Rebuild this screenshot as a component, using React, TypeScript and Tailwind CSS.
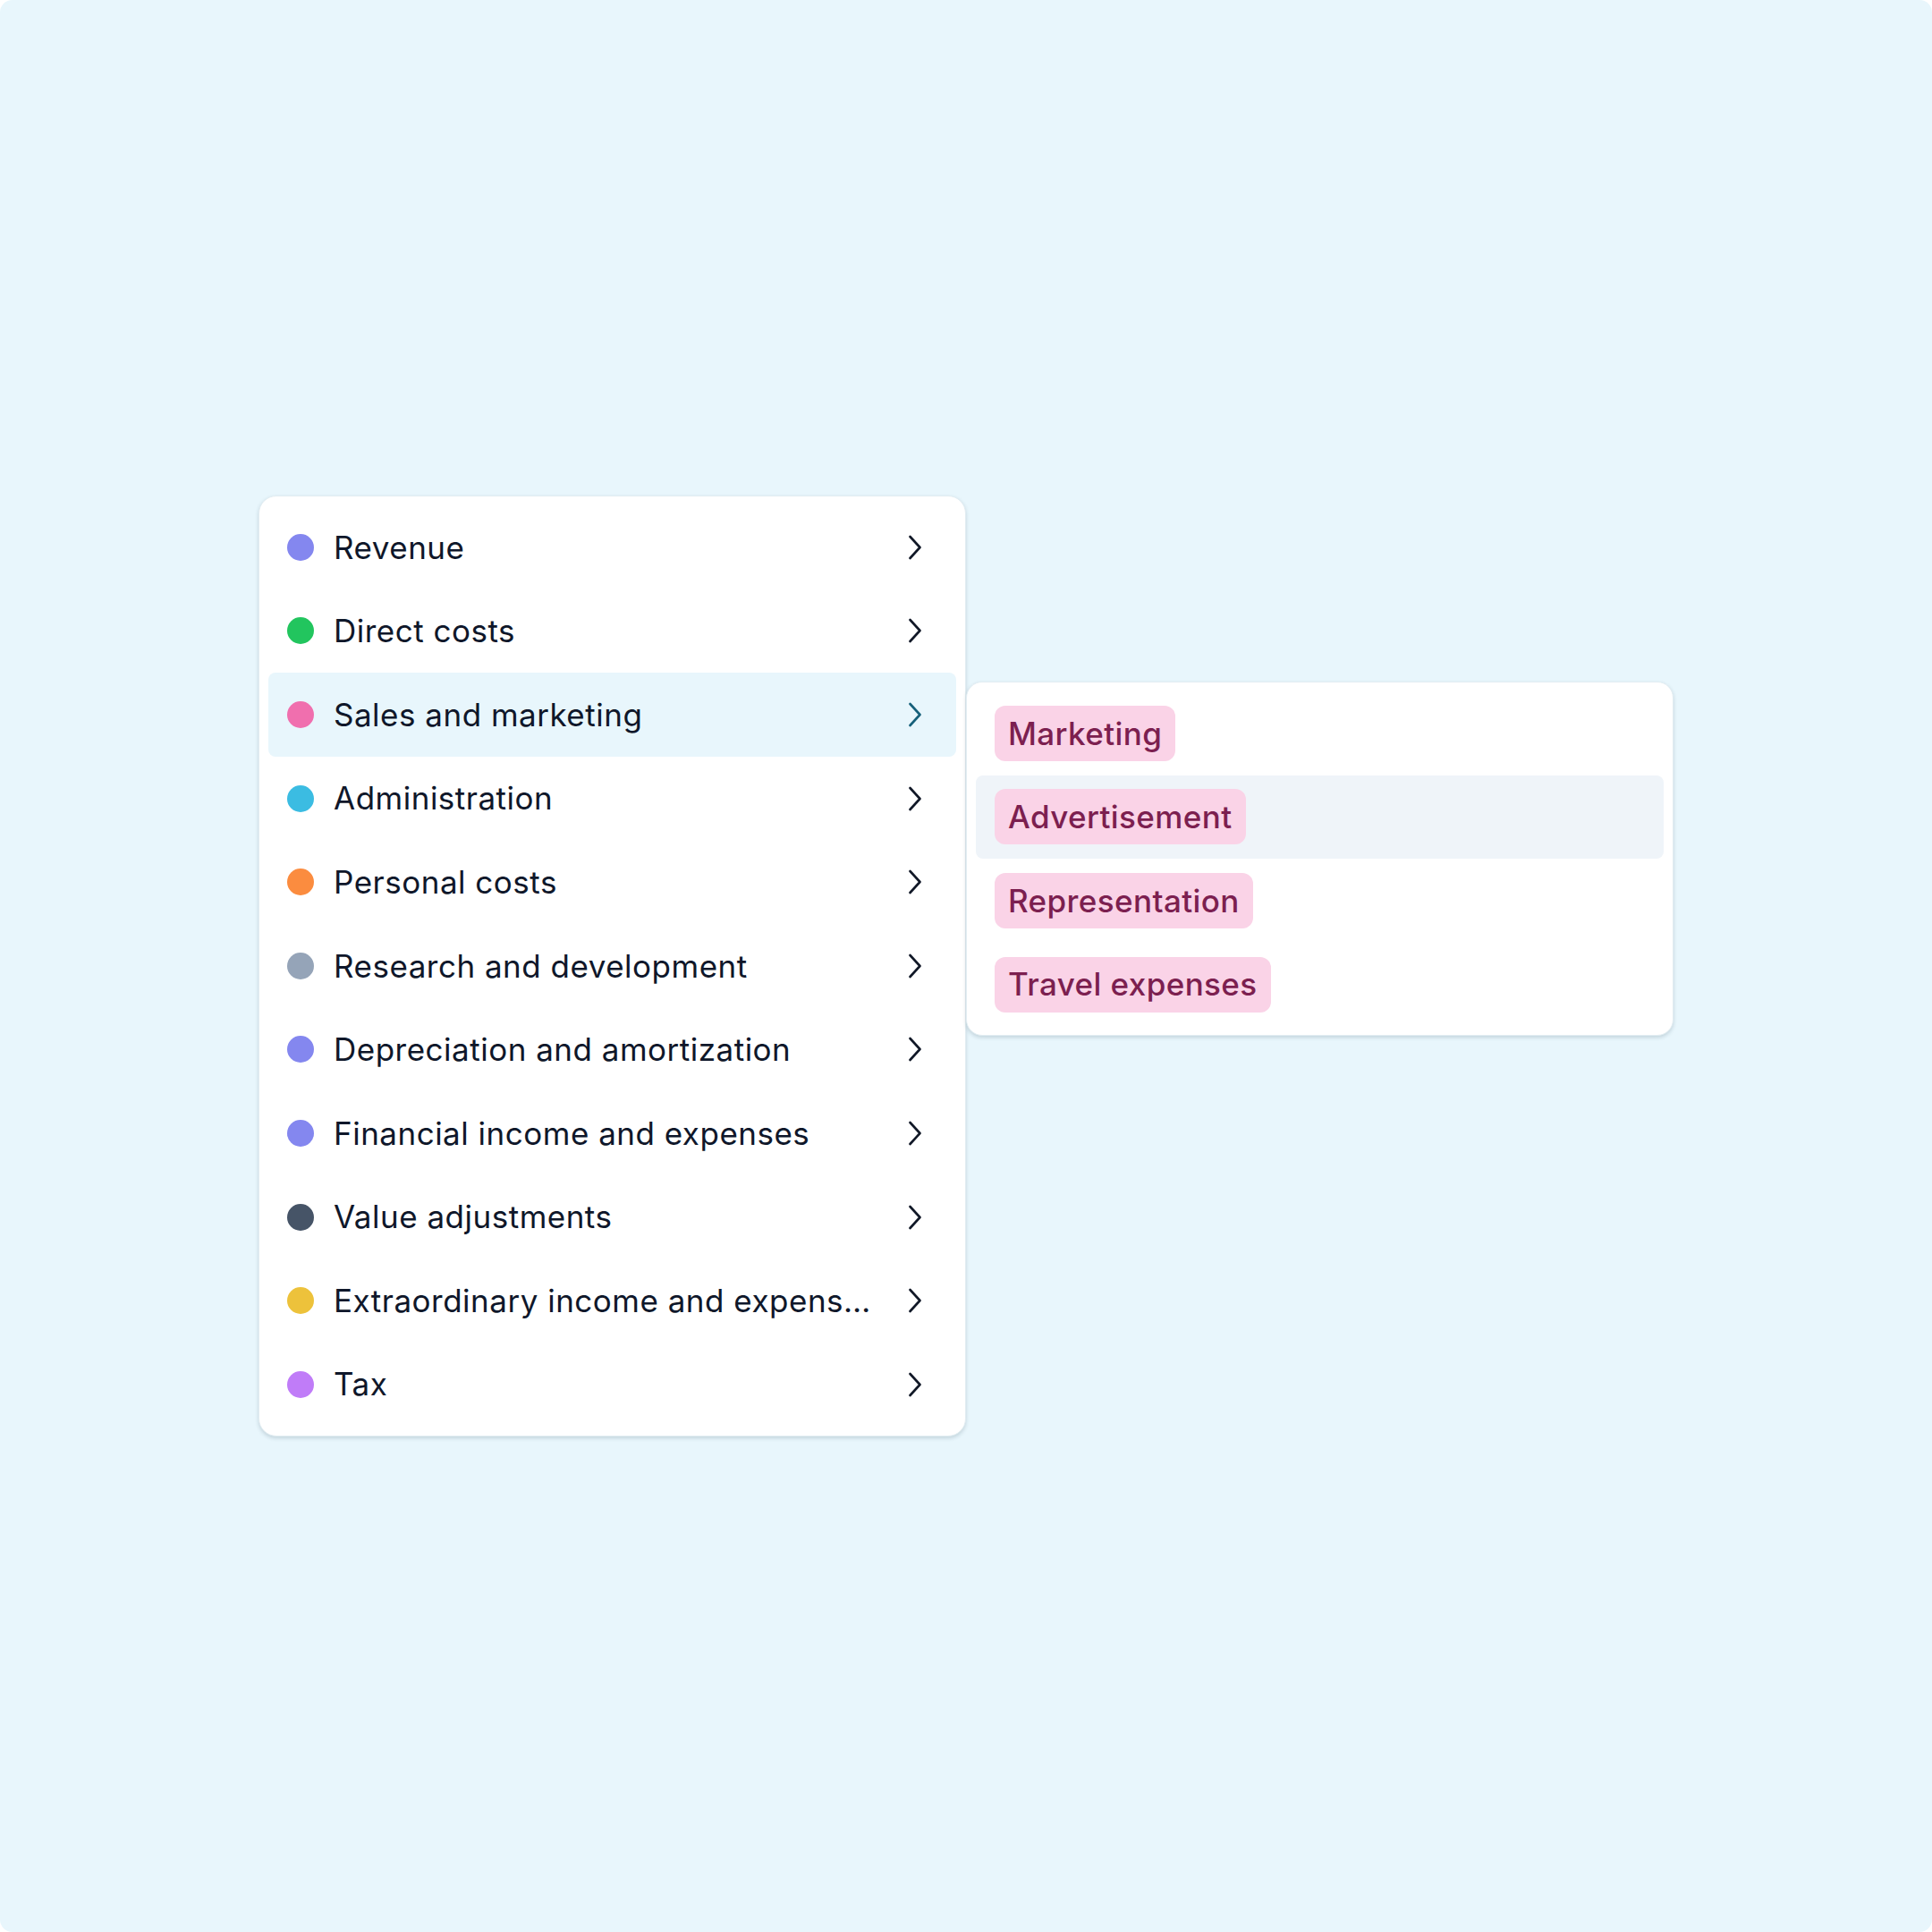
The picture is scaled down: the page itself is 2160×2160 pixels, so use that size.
import React from "react";

const items: { label: string; color: string; active?: boolean }[] = [
  { label: "Revenue", color: "bg-[#8487ef]" },
  { label: "Direct costs", color: "bg-[#22c55e]" },
  { label: "Sales and marketing", color: "bg-[#f06fae]", active: true },
  { label: "Administration", color: "bg-[#3bbce2]" },
  { label: "Personal costs", color: "bg-[#fb8c3f]" },
  { label: "Research and development", color: "bg-[#95a4b8]" },
  { label: "Depreciation and amortization", color: "bg-[#8487ef]" },
  { label: "Financial income and expenses", color: "bg-[#8487ef]" },
  { label: "Value adjustments", color: "bg-[#465467]" },
  { label: "Extraordinary income and expenses", color: "bg-[#edc23b]" },
  { label: "Tax", color: "bg-[#c07cf8]" },
];

const subItems: { label: string; active?: boolean }[] = [
  { label: "Marketing" },
  { label: "Advertisement", active: true },
  { label: "Representation" },
  { label: "Travel expenses" },
];

function Chevron({ active }: { active?: boolean }) {
  return (
    <svg
      width="16"
      height="28"
      viewBox="0 0 16 28"
      fill="none"
      className={`shrink-0 ${active ? "text-[#16607a]" : "text-[#111827]"}`}
    >
      <polyline
        points="2.5,2 13.5,14 2.5,26"
        stroke="currentColor"
        strokeWidth="2.6"
        strokeLinecap="round"
        strokeLinejoin="round"
      />
    </svg>
  );
}

export default function App() {
  return (
    <div className="w-[2160px] h-[2160px] bg-white">
      <div
        className="w-full h-full bg-[#e8f6fc] rounded-[14px] pt-[554px] pl-[289px] flex items-start"
        style={{ fontFamily: "Inter, 'Noto Sans', sans-serif" }}
      >
        <div className="w-[791px] bg-white rounded-[20px] p-[10px] shadow-[0_2px_4px_rgba(30,60,80,0.18)] border border-[#e2edf2]">
          {items.map((it) => (
            <div
              key={it.label}
              className={`h-[93.6px] flex items-center pl-[21px] pr-[38px] rounded-[8px] ${
                it.active ? "bg-[#e8f6fc]" : ""
              }`}
            >
              <span className={`w-[30px] h-[30px] rounded-full shrink-0 ${it.color}`} />
              <span className="ml-[22px] flex-1 min-w-0 truncate text-[35px] text-[#0f172a] tracking-[0.5px] pr-[36px]">
                {it.label}
              </span>
              <Chevron active={it.active} />
            </div>
          ))}
        </div>
        <div className="w-[791px] mt-[208px] bg-white rounded-[18px] p-[10px] shadow-[0_2px_4px_rgba(30,60,80,0.18)] border border-[#e2edf2]">
          {subItems.map((s) => (
            <div
              key={s.label}
              className={`h-[93.6px] flex items-center pl-[21px] rounded-[8px] ${
                s.active ? "bg-[#eff4f9]" : ""
              }`}
            >
              <span className="h-[62px] flex items-center px-[15px] rounded-[12px] bg-[#fad3e7] text-[#7c1f50] text-[35px] font-medium tracking-[0.4px]">
                {s.label}
              </span>
            </div>
          ))}
        </div>
      </div>
    </div>
  );
}
